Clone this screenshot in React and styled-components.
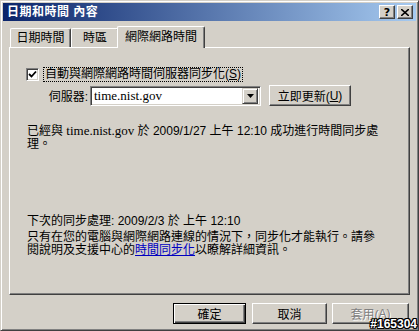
import React from "react";
import styled, { createGlobalStyle } from "styled-components";

const Global = createGlobalStyle`
  html, body { margin: 0; padding: 0; background: #d4d0c8; }
  body { font-family: "Liberation Sans", "Noto Sans CJK TC", sans-serif; font-size: 12px; color: #000; }
  * { box-sizing: border-box; }
`;

const Window = styled.div`
  position: relative;
  width: 419px;
  height: 331px;
  background: #d4d0c8;
  border-top: 1px solid #d4d0c8;
  border-left: 1px solid #d4d0c8;
  border-right: 1px solid #404040;
  border-bottom: 1px solid #404040;
  box-shadow: inset 1px 1px #fff, inset -1px -1px #808080;
  padding: 2px;
  display: flex;
  flex-direction: column;
  overflow: hidden;
`;

const TitleBar = styled.div`
  height: 18px;
  flex: none;
  display: flex;
  align-items: center;
  padding: 0 3px 0 4px;
  background: linear-gradient(to right, #0a246a, #a6caf0);
`;

const Title = styled.div`
  flex: 1;
  color: #fff;
  font-weight: bold;
  font-size: 12px;
  line-height: 14px;
  letter-spacing: 0.5px;
`;

const CapButton = styled.div`
  width: 16px;
  height: 14px;
  margin-left: ${(p) => (p.$gap ? "2px" : "0")};
  background: #d4d0c8;
  border-top: 1px solid #fff;
  border-left: 1px solid #fff;
  border-right: 1px solid #404040;
  border-bottom: 1px solid #404040;
  box-shadow: inset -1px -1px #808080;
  display: flex;
  align-items: center;
  justify-content: center;
  font-family: "DejaVu Sans", sans-serif;
  font-weight: bold;
  font-size: 11px;
  line-height: 1;
`;

const Body = styled.div`
  flex: 1;
  display: flex;
  flex-direction: column;
  padding: 4px 6px 0 6px;
`;

const TabStrip = styled.div`
  height: 22px;
  display: flex;
  align-items: flex-end;
  padding-left: 1px;
  position: relative;
  z-index: 1;
`;

const Tab = styled.div`
  height: ${(p) => (p.$active ? "22px" : "19px")};
  margin: ${(p) => (p.$active ? "0 -2px 0 -2px" : "0")};
  margin-bottom: ${(p) => (p.$active ? "-1px" : "0")};
  width: ${(p) => p.$w}px;
  background: #d4d0c8;
  border-top: 1px solid #fff;
  border-left: 1px solid #fff;
  border-right: 1px solid #404040;
  box-shadow: inset -1px 0 #808080;
  border-radius: 2px 2px 0 0;
  display: flex;
  align-items: center;
  justify-content: center;
  padding-bottom: ${(p) => (p.$active ? "2px" : "0")};
  font-size: 12px;
  line-height: 14px;
  position: relative;
  z-index: ${(p) => (p.$active ? 2 : 0)};
`;

const Panel = styled.div`
  height: 248px;
  border-top: 1px solid #fff;
  border-left: 1px solid #fff;
  border-right: 1px solid #404040;
  border-bottom: 1px solid #404040;
  box-shadow: inset -1px -1px #808080;
  padding: 19px 16px 0 16px;
  display: flex;
  flex-direction: column;
`;

const CheckRow = styled.div`
  display: flex;
  align-items: center;
  height: 14px;
  gap: 5px;
`;

const CheckBox = styled.div`
  width: 13px;
  height: 13px;
  background: #fff;
  border-top: 1px solid #808080;
  border-left: 1px solid #808080;
  border-right: 1px solid #fff;
  border-bottom: 1px solid #fff;
  box-shadow: inset 1px 1px #404040, inset -1px -1px #d4d0c8;
  display: flex;
  align-items: center;
  justify-content: center;
`;

const FocusLabel = styled.span`
  outline: 1px dotted #000;
  outline-offset: 0px;
  line-height: 13px;
  padding: 0 1px;
`;

const ServerRow = styled.div`
  display: flex;
  align-items: center;
  margin-top: 4px;
  padding-left: 20px;
  height: 21px;
`;

const FieldLabel = styled.span`
  width: 42px;
  margin-right: 2px;
  text-align: right;
`;

const Combo = styled.div`
  width: 171px;
  height: 20px;
  background: #fff;
  border-top: 1px solid #808080;
  border-left: 1px solid #808080;
  border-right: 1px solid #fff;
  border-bottom: 1px solid #fff;
  box-shadow: inset 1px 1px #404040, inset -1px -1px #d4d0c8;
  display: flex;
  align-items: center;
  padding: 2px 2px 2px 3px;
`;

const ComboText = styled.span`
  flex: 1;
  font-family: "Liberation Serif", serif;
  font-size: 13px;
`;

const DropBtn = styled.div`
  width: 16px;
  height: 16px;
  background: #d4d0c8;
  border-top: 1px solid #d4d0c8;
  border-left: 1px solid #d4d0c8;
  border-right: 1px solid #404040;
  border-bottom: 1px solid #404040;
  box-shadow: inset 1px 1px #fff, inset -1px -1px #808080;
  display: flex;
  align-items: center;
  justify-content: center;
`;

const Button = styled.div`
  width: ${(p) => p.$w}px;
  height: ${(p) => p.$h || 21}px;
  margin-left: ${(p) => p.$ml || 0}px;
  background: #d4d0c8;
  border: 1px solid ${(p) => (p.$default ? "#000" : "transparent")};
  border-top-color: ${(p) => (p.$default ? "#000" : "#fff")};
  border-left-color: ${(p) => (p.$default ? "#000" : "#fff")};
  border-right-color: ${(p) => (p.$default ? "#000" : "#404040")};
  border-bottom-color: ${(p) => (p.$default ? "#000" : "#404040")};
  box-shadow: ${(p) =>
    p.$default
      ? "inset 1px 1px #fff, inset -1px -1px #404040, inset -2px -2px #808080"
      : "inset -1px -1px #808080"};
  display: flex;
  align-items: center;
  justify-content: center;
  font-size: 12px;
  color: ${(p) => (p.$disabled ? "#808080" : "#000")};
  text-shadow: ${(p) => (p.$disabled ? "1px 1px #fff" : "none")};
`;

const Para = styled.div`
  line-height: 13px;
  margin-top: ${(p) => p.$mt}px;
  padding-left: 1px;
`;

const Serif = styled.span`
  font-family: "Liberation Serif", serif;
  font-size: 13px;
`;

const Link = styled.span`
  color: #0000c0;
  text-decoration: underline;
`;

const Footer = styled.div`
  display: flex;
  justify-content: flex-end;
  margin-top: 8px;
  padding-right: 1px;
`;

const Watermark = styled.div`
  position: absolute;
  right: 1px;
  bottom: -1px;
  font-family: "Liberation Sans", sans-serif;
  font-weight: bold;
  font-size: 12px;
  color: #fff;
  text-shadow: -1px 0 #000, 1px 0 #000, 0 -1px #000, 0 1px #000, 1px 1px #000, -1px -1px #000, 1px -1px #000, -1px 1px #000;
`;

export default function App() {
  return (
    <>
      <Global />
      <Window>
        <TitleBar>
          <Title>日期和時間 內容</Title>
          <CapButton>?</CapButton>
          <CapButton $gap>
            <svg width="8" height="7" viewBox="0 0 8 7">
              <path d="M0 0 L8 7 M8 0 L0 7" stroke="#000" strokeWidth="1.6" />
            </svg>
          </CapButton>
        </TitleBar>
        <Body>
          <TabStrip>
            <Tab $w={61}>日期時間</Tab>
            <Tab $w={48}>時區</Tab>
            <Tab $active $w={88}>網際網路時間</Tab>
          </TabStrip>
          <Panel>
            <CheckRow>
              <CheckBox>
                <svg width="9" height="9" viewBox="0 0 9 9">
                  <path d="M1 4 L3.5 6.5 L8 1.5" stroke="#000" strokeWidth="1.8" fill="none" />
                </svg>
              </CheckBox>
              <FocusLabel>自動與網際網路時間伺服器同步化(<u>S</u>)</FocusLabel>
            </CheckRow>
            <ServerRow>
              <FieldLabel>伺服器:</FieldLabel>
              <Combo>
                <ComboText>time.nist.gov</ComboText>
                <DropBtn>
                  <svg width="7" height="4" viewBox="0 0 7 4">
                    <path d="M0 0 H7 L3.5 4 Z" fill="#000" />
                  </svg>
                </DropBtn>
              </Combo>
              <Button $w={82} $h={21} $ml={8}>立即更新(<u>U</u>)</Button>
            </ServerRow>
            <Para $mt={18}>
              已經與 <Serif>time.nist.gov</Serif> 於 2009/1/27 上午 12:10 成功進行時間同步處
              <br />
              理。
            </Para>
            <Para $mt={64}>下次的同步處理: 2009/2/3 於 上午 12:10</Para>
            <Para $mt={3}>
              只有在您的電腦與網際網路連線的情況下，同步化才能執行。請參
              <br />
              閱說明及支援中心的<Link>時間同步化</Link>以瞭解詳細資訊。
            </Para>
          </Panel>
          <Footer>
            <Button $w={73} $default>確定</Button>
            <Button $w={75} $ml={6}>取消</Button>
            <Button $w={77} $ml={5} $disabled>套用(<u>A</u>)</Button>
          </Footer>
        </Body>
        <Watermark>#165304</Watermark>
      </Window>
    </>
  );
}
